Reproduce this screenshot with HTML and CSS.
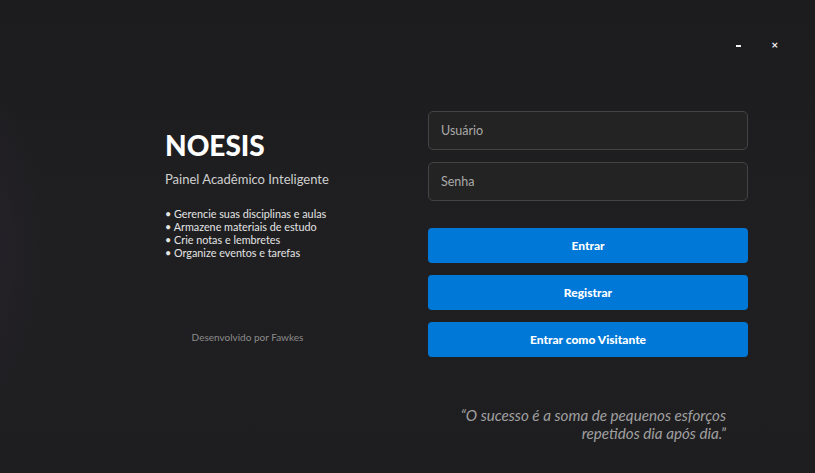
FILE: index.html
```html
<!DOCTYPE html>
<html lang="pt">
<head>
<meta charset="utf-8">
<title>NOESIS</title>
<link rel="stylesheet" href="styles.css">
</head>
<body>
<div class="window">
  <div class="titlebar">
    <span class="ctl ctl-min"></span>
    <span class="ctl ctl-close">×</span>
  </div>
  <div class="content">
    <section class="info">
      <h1 class="brand">NOESIS</h1>
      <p class="tagline">Painel Acadêmico Inteligente</p>
      <ul class="features">
        <li>• Gerencie suas disciplinas e aulas</li>
        <li>• Armazene materiais de estudo</li>
        <li>• Crie notas e lembretes</li>
        <li>• Organize eventos e tarefas</li>
      </ul>
      <p class="credit">Desenvolvido por Fawkes</p>
    </section>
    <section class="login">
      <div class="field"><span class="placeholder">Usuário</span></div>
      <div class="field"><span class="placeholder">Senha</span></div>
      <div class="buttons">
        <button class="btn">Entrar</button>
        <button class="btn">Registrar</button>
        <button class="btn">Entrar como Visitante</button>
      </div>
      <p class="quote">“O sucesso é a soma de pequenos esforços<br>repetidos dia após dia.”</p>
    </section>
  </div>
</div>
</body>
</html>
```
FILE: styles.css
```css
* { box-sizing: border-box; }
html, body { margin: 0; padding: 0; }
body {
  width: 815px;
  height: 473px;
  overflow: hidden;
  background: #1e1e20;
  font-family: "Lato", "Noto Sans", sans-serif;
  color: #e6e6e6;
}
.window {
  width: 815px;
  height: 473px;
  background:
    radial-gradient(ellipse 120px 260px at -40px 250px, rgba(60, 40, 70, 0.35), rgba(0,0,0,0) 70%),
    linear-gradient(180deg, #1c1c1e 0%, #1f1f21 50%, #1e1e20 100%);
  display: flex;
  flex-direction: column;
}
.titlebar {
  height: 60px;
  display: flex;
  justify-content: flex-end;
  align-items: flex-start;
  padding: 40px 37px 0 0;
  gap: 29px;
}
.ctl {
  width: 7px;
  height: 10px;
  position: relative;
  color: #f2f2f2;
}
.ctl-min::after {
  content: "";
  position: absolute;
  left: 1px;
  top: 5px;
  width: 5px;
  height: 2px;
  background: #f2f2f2;
}
.ctl-close {
  font-family: "DejaVu Sans", sans-serif;
  font-size: 9px;
  line-height: 10px;
  font-weight: bold;
}
.content {
  display: flex;
  padding-left: 165px;
  gap: 98px;
}
.info {
  width: 165px;
  padding-top: 68px;
  display: flex;
  flex-direction: column;
}
.brand {
  margin: 0;
  font-family: "Lato", sans-serif;
  font-weight: 900;
  font-size: 28px;
  line-height: 34px;
  color: #ffffff;
}
.tagline {
  margin: 9px 0 0 0;
  font-size: 13px;
  line-height: 16px;
  color: #cfcfcf;
}
.features {
  list-style: none;
  margin: 20px 0 0 0;
  padding: 0;
  font-size: 10.8px;
  line-height: 13px;
  color: #e4e4e4;
  white-space: nowrap;
}
.credit {
  margin: 72px 0 0 0;
  text-align: center;
  font-size: 10px;
  color: #8c8c8c;
}
.login {
  width: 320px;
  padding-top: 51px;
  display: flex;
  flex-direction: column;
}
.field {
  height: 39px;
  border: 1px solid #434343;
  border-radius: 5px;
  background: #232323;
  display: flex;
  align-items: center;
  padding-left: 12px;
  margin-bottom: 12px;
}
.placeholder {
  font-size: 12.5px;
  color: #a9a9a9;
}
.buttons {
  margin-top: 15px;
  display: flex;
  flex-direction: column;
  gap: 12px;
}
.btn {
  height: 35px;
  border: none;
  border-radius: 4px;
  background: #0078d7;
  color: #ffffff;
  font-family: "Lato", sans-serif;
  font-weight: 900;
  font-size: 12px;
}
.quote {
  margin: 49px 22px 0 0;
  text-align: right;
  font-style: italic;
  font-size: 15.2px;
  line-height: 18px;
  color: #a0a0a0;
}
```
